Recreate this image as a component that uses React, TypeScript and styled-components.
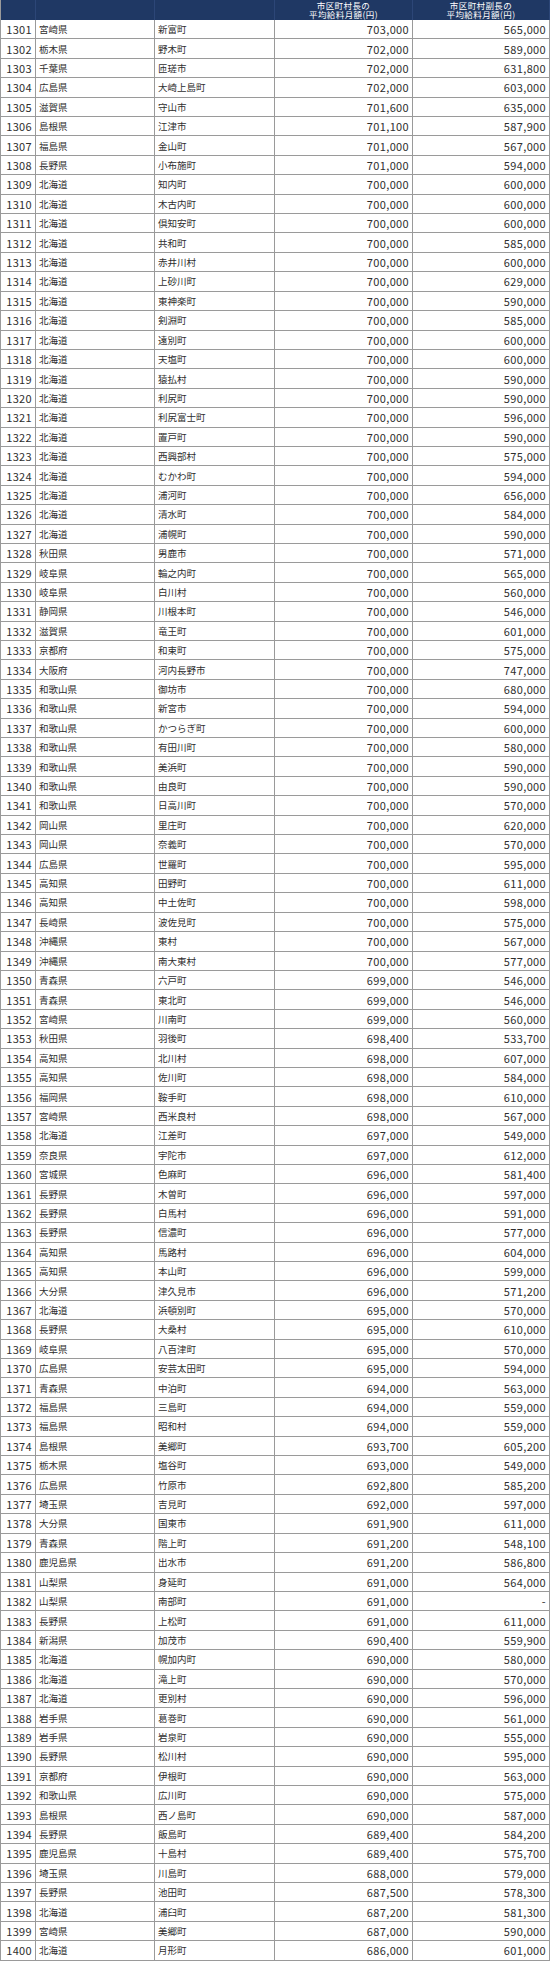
import React from "react";
import styled, { createGlobalStyle } from "styled-components";

const GlobalStyle = createGlobalStyle`
  html, body {
    margin: 0;
    padding: 0;
    background: #ffffff;
  }
  body {
    font-family: "Noto Sans CJK JP", "Noto Sans", sans-serif;
    color: #2e2e2e;
  }
`;

type Row = [number, string, string, string, string];

const rows: Row[] = [
  [1301, "宮崎県", "新富町", "703,000", "565,000"],
  [1302, "栃木県", "野木町", "702,000", "589,000"],
  [1303, "千葉県", "匝瑳市", "702,000", "631,800"],
  [1304, "広島県", "大崎上島町", "702,000", "603,000"],
  [1305, "滋賀県", "守山市", "701,600", "635,000"],
  [1306, "島根県", "江津市", "701,100", "587,900"],
  [1307, "福島県", "金山町", "701,000", "567,000"],
  [1308, "長野県", "小布施町", "701,000", "594,000"],
  [1309, "北海道", "知内町", "700,000", "600,000"],
  [1310, "北海道", "木古内町", "700,000", "600,000"],
  [1311, "北海道", "倶知安町", "700,000", "600,000"],
  [1312, "北海道", "共和町", "700,000", "585,000"],
  [1313, "北海道", "赤井川村", "700,000", "600,000"],
  [1314, "北海道", "上砂川町", "700,000", "629,000"],
  [1315, "北海道", "東神楽町", "700,000", "590,000"],
  [1316, "北海道", "剣淵町", "700,000", "585,000"],
  [1317, "北海道", "遠別町", "700,000", "600,000"],
  [1318, "北海道", "天塩町", "700,000", "600,000"],
  [1319, "北海道", "猿払村", "700,000", "590,000"],
  [1320, "北海道", "利尻町", "700,000", "590,000"],
  [1321, "北海道", "利尻富士町", "700,000", "596,000"],
  [1322, "北海道", "置戸町", "700,000", "590,000"],
  [1323, "北海道", "西興部村", "700,000", "575,000"],
  [1324, "北海道", "むかわ町", "700,000", "594,000"],
  [1325, "北海道", "浦河町", "700,000", "656,000"],
  [1326, "北海道", "清水町", "700,000", "584,000"],
  [1327, "北海道", "浦幌町", "700,000", "590,000"],
  [1328, "秋田県", "男鹿市", "700,000", "571,000"],
  [1329, "岐阜県", "輪之内町", "700,000", "565,000"],
  [1330, "岐阜県", "白川村", "700,000", "560,000"],
  [1331, "静岡県", "川根本町", "700,000", "546,000"],
  [1332, "滋賀県", "竜王町", "700,000", "601,000"],
  [1333, "京都府", "和束町", "700,000", "575,000"],
  [1334, "大阪府", "河内長野市", "700,000", "747,000"],
  [1335, "和歌山県", "御坊市", "700,000", "680,000"],
  [1336, "和歌山県", "新宮市", "700,000", "594,000"],
  [1337, "和歌山県", "かつらぎ町", "700,000", "600,000"],
  [1338, "和歌山県", "有田川町", "700,000", "580,000"],
  [1339, "和歌山県", "美浜町", "700,000", "590,000"],
  [1340, "和歌山県", "由良町", "700,000", "590,000"],
  [1341, "和歌山県", "日高川町", "700,000", "570,000"],
  [1342, "岡山県", "里庄町", "700,000", "620,000"],
  [1343, "岡山県", "奈義町", "700,000", "570,000"],
  [1344, "広島県", "世羅町", "700,000", "595,000"],
  [1345, "高知県", "田野町", "700,000", "611,000"],
  [1346, "高知県", "中土佐町", "700,000", "598,000"],
  [1347, "長崎県", "波佐見町", "700,000", "575,000"],
  [1348, "沖縄県", "東村", "700,000", "567,000"],
  [1349, "沖縄県", "南大東村", "700,000", "577,000"],
  [1350, "青森県", "六戸町", "699,000", "546,000"],
  [1351, "青森県", "東北町", "699,000", "546,000"],
  [1352, "宮崎県", "川南町", "699,000", "560,000"],
  [1353, "秋田県", "羽後町", "698,400", "533,700"],
  [1354, "高知県", "北川村", "698,000", "607,000"],
  [1355, "高知県", "佐川町", "698,000", "584,000"],
  [1356, "福岡県", "鞍手町", "698,000", "610,000"],
  [1357, "宮崎県", "西米良村", "698,000", "567,000"],
  [1358, "北海道", "江差町", "697,000", "549,000"],
  [1359, "奈良県", "宇陀市", "697,000", "612,000"],
  [1360, "宮城県", "色麻町", "696,000", "581,400"],
  [1361, "長野県", "木曽町", "696,000", "597,000"],
  [1362, "長野県", "白馬村", "696,000", "591,000"],
  [1363, "長野県", "信濃町", "696,000", "577,000"],
  [1364, "高知県", "馬路村", "696,000", "604,000"],
  [1365, "高知県", "本山町", "696,000", "599,000"],
  [1366, "大分県", "津久見市", "696,000", "571,200"],
  [1367, "北海道", "浜頓別町", "695,000", "570,000"],
  [1368, "長野県", "大桑村", "695,000", "610,000"],
  [1369, "岐阜県", "八百津町", "695,000", "570,000"],
  [1370, "広島県", "安芸太田町", "695,000", "594,000"],
  [1371, "青森県", "中泊町", "694,000", "563,000"],
  [1372, "福島県", "三島町", "694,000", "559,000"],
  [1373, "福島県", "昭和村", "694,000", "559,000"],
  [1374, "島根県", "美郷町", "693,700", "605,200"],
  [1375, "栃木県", "塩谷町", "693,000", "549,000"],
  [1376, "広島県", "竹原市", "692,800", "585,200"],
  [1377, "埼玉県", "吉見町", "692,000", "597,000"],
  [1378, "大分県", "国東市", "691,900", "611,000"],
  [1379, "青森県", "階上町", "691,200", "548,100"],
  [1380, "鹿児島県", "出水市", "691,200", "586,800"],
  [1381, "山梨県", "身延町", "691,000", "564,000"],
  [1382, "山梨県", "南部町", "691,000", "-"],
  [1383, "長野県", "上松町", "691,000", "611,000"],
  [1384, "新潟県", "加茂市", "690,400", "559,900"],
  [1385, "北海道", "幌加内町", "690,000", "580,000"],
  [1386, "北海道", "滝上町", "690,000", "570,000"],
  [1387, "北海道", "更別村", "690,000", "596,000"],
  [1388, "岩手県", "葛巻町", "690,000", "561,000"],
  [1389, "岩手県", "岩泉町", "690,000", "555,000"],
  [1390, "長野県", "松川村", "690,000", "595,000"],
  [1391, "京都府", "伊根町", "690,000", "563,000"],
  [1392, "和歌山県", "広川町", "690,000", "575,000"],
  [1393, "島根県", "西ノ島町", "690,000", "587,000"],
  [1394, "長野県", "飯島町", "689,400", "584,200"],
  [1395, "鹿児島県", "十島村", "689,400", "575,700"],
  [1396, "埼玉県", "川島町", "688,000", "579,000"],
  [1397, "長野県", "池田町", "687,500", "578,300"],
  [1398, "北海道", "浦臼町", "687,200", "581,300"],
  [1399, "宮崎県", "美郷町", "687,000", "590,000"],
  [1400, "北海道", "月形町", "686,000", "601,000"],
];

const Sheet = styled.div`
  width: 550px;
  display: grid;
  grid-template-columns: 35px 119px 120px 138px 137px;
  grid-template-rows: 20px;
  grid-auto-rows: 19.41px;
  border-left: 1px solid #9a9a9a;
  box-sizing: border-box;
`;

const HeadCell = styled.div`
  background: #1f3864;
  color: #ffffff;
  font-size: 8.5px;
  line-height: 9.5px;
  text-align: center;
  display: flex;
  flex-direction: column;
  justify-content: center;
  align-items: center;
  letter-spacing: 0.4px;
  border-right: 1px solid #2c4677;
  box-sizing: border-box;
  white-space: nowrap;
  overflow: hidden;
`;

const HeadLine = styled.span`
  display: block;
  height: 9.5px;
`;

const Cell = styled.div<{ $align?: "left" | "right"; $num?: boolean }>`
  display: flex;
  align-items: center;
  justify-content: ${(p) => (p.$align === "right" ? "flex-end" : "flex-start")};
  padding: ${(p) => (p.$align === "right" ? "0 3px 0 0" : "0 0 0 3px")};
  font-size: ${(p) => (p.$num ? "11px" : "9.5px")};
  letter-spacing: ${(p) => (p.$num ? "0.35px" : "0")};
  border-right: 1px solid #9a9a9a;
  border-bottom: 1px solid #9a9a9a;
  box-sizing: border-box;
  white-space: nowrap;
  overflow: hidden;
`;

export default function App() {
  return (
    <>
      <GlobalStyle />
      <Sheet>
        <HeadCell />
        <HeadCell />
        <HeadCell />
        <HeadCell>
          <HeadLine>市区町村長の</HeadLine>
          <HeadLine>平均給料月額(円)</HeadLine>
        </HeadCell>
        <HeadCell>
          <HeadLine>市区町村副長の</HeadLine>
          <HeadLine>平均給料月額(円)</HeadLine>
        </HeadCell>
        {rows.map(([rank, pref, city, mayor, deputy]) => (
          <React.Fragment key={rank}>
            <Cell $align="right" $num>
              {rank}
            </Cell>
            <Cell>{pref}</Cell>
            <Cell>{city}</Cell>
            <Cell $align="right" $num>
              {mayor}
            </Cell>
            <Cell $align="right" $num>
              {deputy}
            </Cell>
          </React.Fragment>
        ))}
      </Sheet>
    </>
  );
}
